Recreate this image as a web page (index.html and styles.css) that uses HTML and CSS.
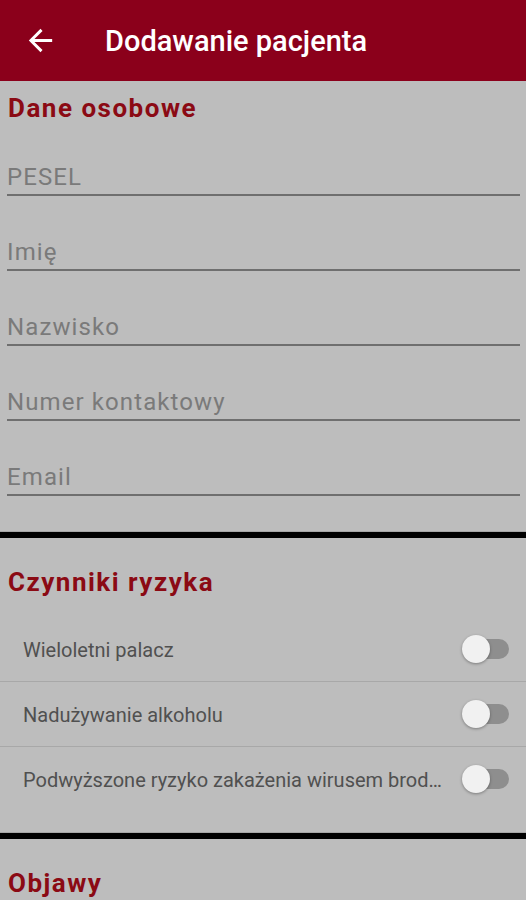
FILE: index.html
```
<!DOCTYPE html>
<html lang="pl">
<head>
    <meta charset="UTF-8">
    <meta name="viewport" content="width=device-width, initial-scale=1.0">
    <title>Dodawanie pacjenta</title>

    <link rel="stylesheet" href="styles.css">
</head>
<body>
    <header class="toolbar">
        <svg class="back" viewBox="0 0 24 24" width="35" height="35">
            <path d="M20 11H7.83l5.59-5.59L12 4l-8 8 8 8 1.41-1.41L7.83 13H20v-2z" fill="#fff"/>
        </svg>
        <h1 class="title">Dodawanie pacjenta</h1>
    </header>

    <div class="section">
        <h2 class="heading first">Dane osobowe</h2>
        <input class="field" type="text" placeholder="PESEL">
        <input class="field" type="text" placeholder="Imię">
        <input class="field" type="text" placeholder="Nazwisko">
        <input class="field" type="text" placeholder="Numer kontaktowy">
        <input class="field" type="text" placeholder="Email">
    </div>

    <div class="divider"></div>

    <div class="section">
        <h2 class="heading">Czynniki ryzyka</h2>
    </div>
    <div class="rows">
        <div class="row">
            <span class="label">Wieloletni palacz</span>
            <span class="switch"><span class="thumb"></span></span>
        </div>
        <div class="row">
            <span class="label">Nadużywanie alkoholu</span>
            <span class="switch"><span class="thumb"></span></span>
        </div>
        <div class="row last">
            <span class="label">Podwyższone ryzyko zakażenia wirusem brodawczaka ludzkiego</span>
            <span class="switch"><span class="thumb"></span></span>
        </div>
    </div>

    <div class="divider"></div>

    <div class="section">
        <h2 class="heading">Objawy</h2>
    </div>
</body>
</html>
```

FILE: styles.css
```
body {
    margin: 0;
    font-family: Roboto, "Liberation Sans", sans-serif;
    background-color: #bdbdbd;
    overflow: hidden;
}

.toolbar {
    display: flex;
    align-items: center;
    height: 81px;
    padding-left: 23px;
    background-color: #8b001b;
}

.back {
    display: block;
}

.title {
    margin: 0 0 0 47px;
    font-size: 29px;
    font-weight: 500;
    color: white;
}

.section {
    padding: 0 6px 0 7px;
}

.heading {
    margin: 29px 0 0 1px;
    font-size: 26px;
    line-height: 30px;
    font-weight: bold;
    letter-spacing: 1.5px;
    color: #8b0a14;
}

.heading.first {
    margin-top: 12px;
}

.field {
    display: block;
    width: 100%;
    height: 35px;
    margin: 38px 0 0 0;
    padding: 0;
    border: none;
    border-bottom: 2px solid #6f6f6f;
    background: transparent;
    font-family: inherit;
    font-size: 24px;
    letter-spacing: 1.1px;
    color: #333;
    box-sizing: content-box;
    outline: none;
}

.heading + .field {
    margin-top: 36px;
}

.field::placeholder {
    color: #7a7a7a;
}

.divider {
    height: 6px;
    margin-top: 35px;
    background-color: black;
    border-top: 1px solid #a6a6a6;
}

.rows {
    margin-top: 20px;
}

.row {
    display: flex;
    align-items: center;
    height: 64px;
    padding: 0 17px 0 23px;
    border-bottom: 1px solid #a8a8a8;
}

.row.last {
    border-bottom: none;
}

.rows + .divider {
    margin-top: 21px;
}

.label {
    flex: 1;
    min-width: 0;
    padding-top: 2px;
    font-size: 20px;
    color: #505050;
    white-space: nowrap;
    overflow: hidden;
    text-overflow: ellipsis;
}

.switch {
    position: relative;
    flex: none;
    width: 47px;
    height: 20px;
    margin-left: 12px;
    border-radius: 10px;
    background-color: #8e8e8e;
}

.thumb {
    position: absolute;
    left: 0;
    top: -4px;
    width: 28px;
    height: 28px;
    border-radius: 50%;
    background-color: #f1f1f1;
    box-shadow: 0 1px 3px rgba(0, 0, 0, 0.35);
}
```
